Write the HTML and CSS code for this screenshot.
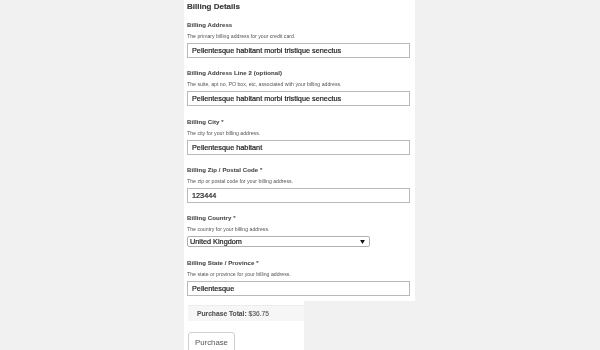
FILE: index.html
```html
<!DOCTYPE html>
<html lang="en">
<head>
    <meta charset="UTF-8">
    <meta name="viewport" content="width=device-width, initial-scale=1.0">
    <title>Billing Details</title>
    <link rel="stylesheet" href="styles.css">
</head>
<body>
    <div class="checkout">
        <form class="billing-panel">
            <h2>Billing Details</h2>

            <div class="field">
                <label for="address">Billing Address</label>
                <p class="hint">The primary billing address for your credit card.</p>
                <input type="text" id="address" value="Pellentesque habitant morbi tristique senectus">
            </div>

            <div class="field">
                <label for="address2">Billing Address Line 2 (optional)</label>
                <p class="hint">The suite, apt no, PO box, etc, associated with your billing address.</p>
                <input type="text" id="address2" value="Pellentesque habitant morbi tristique senectus">
            </div>

            <div class="field">
                <label for="city">Billing City <span class="req">*</span></label>
                <p class="hint">The city for your billing address.</p>
                <input type="text" id="city" value="Pellentesque habitant">
            </div>

            <div class="field">
                <label for="zip">Billing Zip / Postal Code <span class="req">*</span></label>
                <p class="hint">The zip or postal code for your billing address.</p>
                <input type="text" id="zip" value="123444">
            </div>

            <div class="field">
                <label for="country">Billing Country <span class="req">*</span></label>
                <p class="hint">The country for your billing address.</p>
                <div class="select-wrap">
                    <select id="country">
                        <option>United Kingdom</option>
                        <option>United States</option>
                    </select>
                    <svg class="caret" viewBox="0 0 6 5"><path d="M0 0H6L3 5Z" fill="#111"/></svg>
                </div>
            </div>

            <div class="field">
                <label for="state">Billing State / Province <span class="req">*</span></label>
                <p class="hint">The state or province for your billing address.</p>
                <input type="text" id="state" value="Pellentesque">
            </div>
        </form>

        <div class="purchase-area">
            <div class="total"><strong>Purchase Total:</strong> $36.75</div>
            <button type="button">Purchase</button>
        </div>
    </div>
</body>
</html>
```

FILE: styles.css
```css
body {
    font-family: "Liberation Sans", Arial, sans-serif;
    margin: 0;
    background-color: #f1f1f1;
    color: #444;
    height: 350px;
    overflow: hidden;
}

.checkout {
    margin-left: 184px;
    display: flex;
    flex-direction: column;
    will-change: transform; /* keeps the tiny text in greyscale */
}

.billing-panel {
    background: #fff;
    width: 223px;
    padding: 1px 5px 5px 3px;
}

.billing-panel h2 {
    font-size: 8px;
    line-height: 12px;
    margin: 0 0 8px;
    color: #3a3a3a;
    -webkit-text-stroke: 0.15px currentColor;
}

.field {
    margin-bottom: 11.33px;
}

.field:last-child {
    margin-bottom: 0;
}

.field label {
    display: block;
    font-size: 6px;
    font-weight: bold;
    line-height: 8px;
    color: #4a4a4a;
    letter-spacing: 0.1px;
    -webkit-text-stroke: 0.1px currentColor;
}

.req {
    font-weight: normal;
}

.hint {
    font-size: 5.2px;
    line-height: 8px;
    color: #555;
    margin: 3px 0 3px;
}

.field input {
    display: block;
    box-sizing: border-box;
    width: 100%;
    height: 15px;
    border: 1px solid #b9b9b9;
    padding: 0 4px;
    font-family: inherit;
    font-size: 7.3px;
    color: #1a1a1a;
    background: #fff;
    -webkit-text-stroke: 0.2px currentColor;
}

.select-wrap {
    position: relative;
    width: 183px;
}

.select-wrap select {
    display: block;
    box-sizing: border-box;
    width: 100%;
    height: 11px;
    border: 1px solid #b0b0b0;
    border-radius: 2px;
    padding: 0 2px;
    font-family: inherit;
    font-size: 7.3px;
    line-height: 9px;
    color: #1a1a1a;
    background: #fff;
    appearance: none;
    -webkit-text-stroke: 0.2px currentColor;
}

.caret {
    position: absolute;
    right: 5px;
    top: 4px;
    width: 5px;
    height: 4px;
}

.purchase-area {
    background: #fff;
    width: 116px;
    padding: 4px 0 0 4px;
}

.total {
    background: #f6f6f6;
    border-top: 1px solid #ececec;
    height: 15px;
    line-height: 15px;
    padding-left: 9px;
    font-size: 6.7px;
    color: #555;
    -webkit-text-stroke: 0.1px currentColor;
}

.purchase-area button {
    display: block;
    margin-top: 11px;
    width: 47px;
    height: 22px;
    padding: 0;
    background: #fff;
    border: 1px solid #cfcfcf;
    border-radius: 3px;
    font-family: inherit;
    font-size: 7.8px;
    color: #555;
}
```
